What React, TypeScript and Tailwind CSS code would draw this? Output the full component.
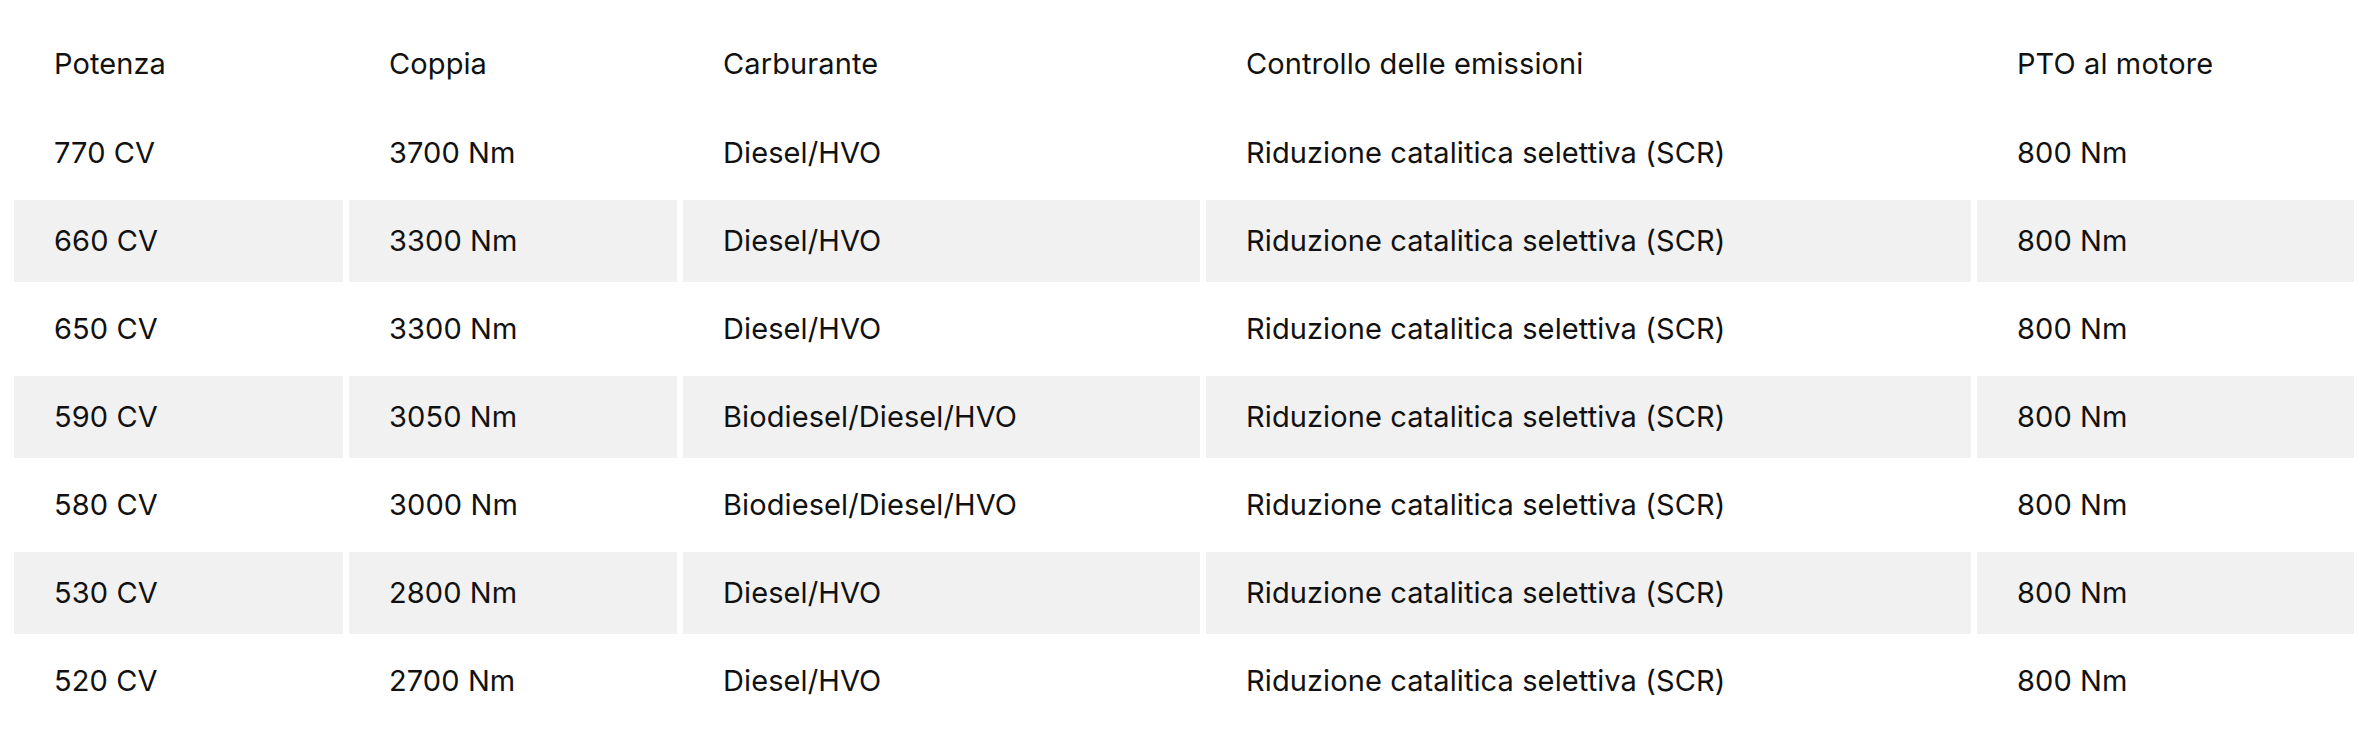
import React from "react";

const header = ["Potenza", "Coppia", "Carburante", "Controllo delle emissioni", "PTO al motore"];
const rows: string[][] = [
  ["770 CV", "3700 Nm", "Diesel/HVO", "Riduzione catalitica selettiva (SCR)", "800 Nm"],
  ["660 CV", "3300 Nm", "Diesel/HVO", "Riduzione catalitica selettiva (SCR)", "800 Nm"],
  ["650 CV", "3300 Nm", "Diesel/HVO", "Riduzione catalitica selettiva (SCR)", "800 Nm"],
  ["590 CV", "3050 Nm", "Biodiesel/Diesel/HVO", "Riduzione catalitica selettiva (SCR)", "800 Nm"],
  ["580 CV", "3000 Nm", "Biodiesel/Diesel/HVO", "Riduzione catalitica selettiva (SCR)", "800 Nm"],
  ["530 CV", "2800 Nm", "Diesel/HVO", "Riduzione catalitica selettiva (SCR)", "800 Nm"],
  ["520 CV", "2700 Nm", "Diesel/HVO", "Riduzione catalitica selettiva (SCR)", "800 Nm"],
];

function Row({ cells, shaded }: { cells: string[]; shaded: boolean }) {
  return (
    <div className="grid grid-cols-[329px_328px_517px_765px_377px] gap-x-[6px]">
      {cells.map((c, i) => (
        <div
          key={i}
          className={`h-[82px] flex items-center pl-[40px] pb-[2px] ${shaded ? "bg-[#f1f1f1]" : "bg-white"}`}
        >
          {c}
        </div>
      ))}
    </div>
  );
}

export default function App() {
  return (
    <div
      className="w-[2364px] h-[742px] bg-white text-[#111111] text-[29px] tracking-[0.1px] leading-none pl-[14px] pt-[24px] overflow-hidden"
      style={{ fontFamily: "Inter, 'Noto Sans', sans-serif" }}
    >
      <div className="flex flex-col gap-y-[6px]">
        <div className="-mt-[1px] mb-[1px]">
          <Row cells={header} shaded={false} />
        </div>
        {rows.map((r, i) => (
          <Row key={i} cells={r} shaded={i % 2 === 1} />
        ))}
      </div>
    </div>
  );
}
